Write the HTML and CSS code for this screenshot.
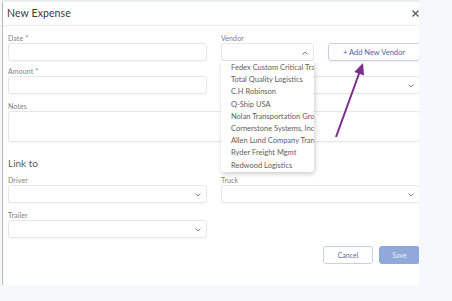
FILE: index.html
```html
<!DOCTYPE html>
<html>
<head>
<meta charset="utf-8">
<link rel="stylesheet" href="styles.css">
</head>
<body>
<div class="clip">
  <div class="modal">
    <div class="modal-header">
      <span class="title">New Expense</span>
      <svg class="close" width="7" height="7" viewBox="0 0 7 7"><path d="M0.5 0.5L6.5 6.5M6.5 0.5L0.5 6.5" stroke="#555" stroke-width="1.2"/></svg>
    </div>
    <div class="modal-body">
      <div class="grid">
        <div class="field">
          <label class="lbl">Date *</label>
          <div class="input"></div>
        </div>
        <div class="field">
          <label class="lbl">Vendor</label>
          <div class="vendor-row">
            <div class="select-wrap">
              <div class="input select">
                <svg class="caret" width="6" height="4" viewBox="0 0 6 4"><path d="M0.5 3.5L3 1L5.5 3.5" fill="none" stroke="#777" stroke-width="0.9"/></svg>
              </div>
              <ul class="dropdown">
                <li>Fedex Custom Critical Transport</li>
                <li>Total Quality Logistics</li>
                <li>C.H Robinson</li>
                <li>Q-Ship USA</li>
                <li>Nolan Transportation Group</li>
                <li>Cornerstone Systems, Inc</li>
                <li>Allen Lund Company Transport</li>
                <li>Ryder Freight Mgmt</li>
                <li>Redwood Logistics</li>
              </ul>
            </div>
            <button class="btn-add">+ Add New Vendor</button>
          </div>
        </div>
        <div class="field">
          <label class="lbl">Amount *</label>
          <div class="input"></div>
        </div>
        <div class="field">
          <label class="lbl">&nbsp;</label>
          <div class="input select">
            <svg class="caret" width="6" height="4" viewBox="0 0 6 4"><path d="M0.5 0.5L3 3L5.5 0.5" fill="none" stroke="#777" stroke-width="0.9"/></svg>
          </div>
        </div>
      </div>
      <div class="field notes">
        <label class="lbl">Notes</label>
        <div class="input textarea"></div>
      </div>
      <h3 class="section">Link to</h3>
      <div class="grid">
        <div class="field">
          <label class="lbl">Driver</label>
          <div class="input select">
            <svg class="caret" width="6" height="4" viewBox="0 0 6 4"><path d="M0.5 0.5L3 3L5.5 0.5" fill="none" stroke="#777" stroke-width="0.9"/></svg>
          </div>
        </div>
        <div class="field">
          <label class="lbl">Truck</label>
          <div class="input select">
            <svg class="caret" width="6" height="4" viewBox="0 0 6 4"><path d="M0.5 0.5L3 3L5.5 0.5" fill="none" stroke="#777" stroke-width="0.9"/></svg>
          </div>
        </div>
        <div class="field trailer">
          <label class="lbl">Trailer</label>
          <div class="input select">
            <svg class="caret" width="6" height="4" viewBox="0 0 6 4"><path d="M0.5 0.5L3 3L5.5 0.5" fill="none" stroke="#777" stroke-width="0.9"/></svg>
          </div>
        </div>
      </div>
      <div class="footer">
        <button class="btn-cancel">Cancel</button>
        <button class="btn-save">Save</button>
      </div>
    </div>
  </div>
</div>
<svg class="arrow" width="452" height="301" viewBox="0 0 452 301">
  <line x1="336" y1="137" x2="360" y2="71" stroke="#7b2d8e" stroke-width="2"/>
  <polygon points="363,63 364,75.5 354.3,72" fill="#7b2d8e"/>
</svg>
</body>
</html>
```
FILE: styles.css
```css
* { box-sizing: border-box; }
html, body { margin: 0; padding: 0; }
body {
  background: #f7f8fc;
  font-family: Lato, "Open Sans", sans-serif;
  width: 452px;
  height: 301px;
  overflow: hidden;
  position: relative;
}
.clip {
  margin-left: 2px;
  width: 417px;
  overflow: hidden;
  border-top: 2px solid #e9efed;
}
.modal {
  width: 423px;
  height: 283px;
  background: #fff;
  border-left: 1px solid #b9b9b9;
}
.modal-header {
  height: 24px;
  border-bottom: 1px solid #ececec;
  display: flex;
  align-items: center;
  justify-content: space-between;
  padding: 0 6px 1px 4px;
}
.title {
  font-size: 10.5px;
  color: #3a3a3a;
  letter-spacing: 0.1px;
}
.close { display: block; margin-top: 1px; }
.modal-body {
  padding: 8px 5px 0 5px;
}
.grid {
  display: grid;
  grid-template-columns: 199px 199px;
  column-gap: 14px;
  row-gap: 6px;
}
.field { display: flex; flex-direction: column; }
.lbl {
  font-size: 7px;
  line-height: 9px;
  color: #808080;
  height: 9px;
  letter-spacing: 0.1px;
}
.input {
  height: 18px;
  border: 1px solid #e6e6e6;
  border-radius: 3px;
  background: #fff;
  box-shadow: 0 1px 1px rgba(0,0,0,0.03);
}
.select {
  position: relative;
}
.caret {
  position: absolute;
  right: 5px;
  top: 7px;
}
.vendor-row {
  display: flex;
  gap: 14px;
}
.select-wrap {
  width: 93px;
  position: relative;
}
.dropdown {
  position: absolute;
  left: 0;
  top: 18px;
  width: 93px;
  margin: 0;
  padding: 1px 0 0 0;
  list-style: none;
  background: #fff;
  box-shadow: 1px 2px 5px rgba(0,0,0,0.2);
  border-radius: 0 0 3px 3px;
  z-index: 5;
  overflow: hidden;
}
.dropdown li {
  height: 12.2px;
  line-height: 12.2px;
  font-size: 7.5px;
  color: #5e5e5e;
  padding-left: 10px;
  white-space: nowrap;
  overflow: hidden;
}
.btn-add {
  flex: 1;
  height: 18px;
  border: 1px solid #c9d2e4;
  border-radius: 3px;
  background: #fff;
  color: #4d66a6;
  font-family: inherit;
  font-size: 7.5px;
  padding: 0;
  box-shadow: 0 1px 2px rgba(0,0,0,0.06);
}
.notes { margin-top: 8px; }
.textarea { height: 31px; }
.section {
  margin: 15px 0 7px 0;
  font-weight: normal;
  font-size: 10px;
  line-height: 12px;
  color: #5a5a5a;
}
.trailer { margin-top: 2px; }
.footer {
  display: flex;
  justify-content: flex-end;
  gap: 6px;
  margin-top: 8px;
}
.footer button {
  height: 18px;
  border-radius: 3px;
  font-family: inherit;
  font-size: 7px;
  padding: 0;
}
.btn-cancel {
  width: 50px;
  border: 1px solid #c9d1e2;
  background: #fff;
  color: #5a6c9c;
}
.btn-save {
  width: 41px;
  border: 1px solid #90a9db;
  background: #90a9db;
  color: #e9eef9;
}
.arrow {
  position: absolute;
  left: 0;
  top: 0;
  pointer-events: none;
}
```
